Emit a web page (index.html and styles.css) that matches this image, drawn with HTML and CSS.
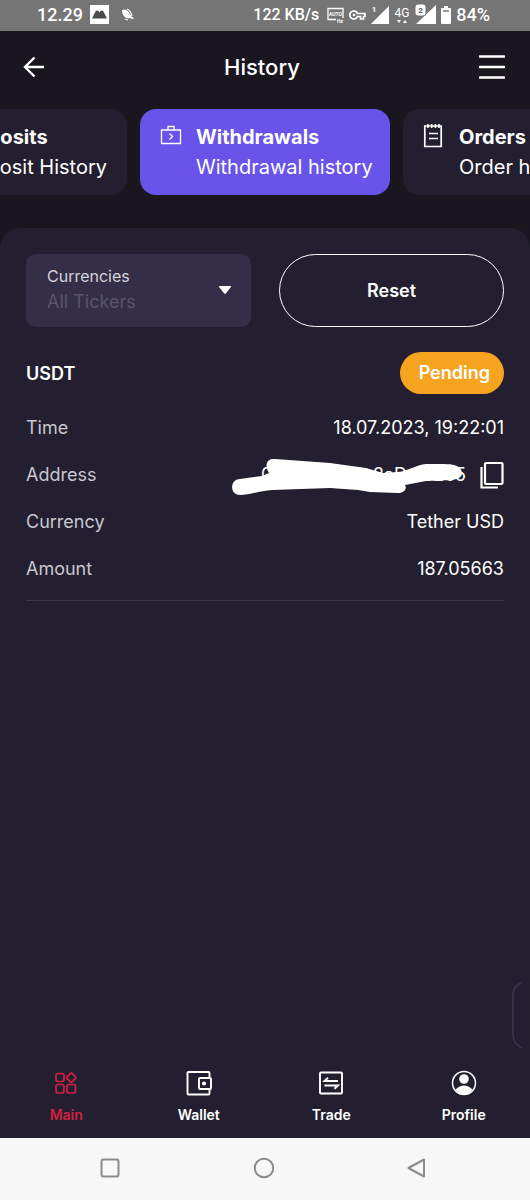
FILE: index.html
```html
<!DOCTYPE html>
<html lang="en">
<head>
<meta charset="utf-8">
<meta name="viewport" content="width=device-width, initial-scale=1">
<title>History</title>
<link rel="stylesheet" href="styles.css">
</head>
<body>
<div class="statusbar">
  <div class="status-left">
    <span>12.29</span>
    <svg width="19" height="19" viewBox="0 0 19 19" aria-hidden="true"><rect width="19" height="19" fill="#fff"/><path d="M2 13.500L5.500 6.500q1-1.500 3-.5l1 1.500 1-1.500q2-1 3 .5L17 13.500z" fill="#4c4c4c"/></svg>
    <svg class="leaf" width="14" height="14" viewBox="0 0 14 14" aria-hidden="true"><path d="M1 2q3-1 4 0 3 1 6 7l2 1-1 1-4-1q-2 1-4-1Q1 7 1 2z" fill="#fff"/><path d="M6 1c3 1 4 3 5 7M4 11l3 1" stroke="#fff" stroke-width="1.200" fill="none"/></svg>
  </div>
  <div class="status-right">
    <span class="speed">122 KB/s</span>
    <svg width="17" height="16" viewBox="0 0 17 16" aria-hidden="true"><path d="M9 12.500H1V1.500h15V11" fill="none" stroke="#fff" stroke-width="1.300"/><text x="8.500" y="9" class="tiny">AUTO</text><text x="13" y="16" class="tiny">Hz</text></svg>
    <svg width="17" height="12" viewBox="0 0 17 12" aria-hidden="true"><path d="M8.500 4.500H16v3h-1.500V10h-3V7.500h-3a4 4 0 1 1 0-3z" fill="none" stroke="#fff" stroke-width="1.700"/><circle cx="5" cy="6" r="1.300" fill="#fff"/></svg>
    <svg width="18" height="20" viewBox="0 0 18 20" aria-hidden="true"><path d="M18 1v18H0z" fill="#fff"/><text x="3" y="7" class="sim">1</text></svg>
    <svg width="16" height="20" viewBox="0 0 16 20" aria-hidden="true"><text x="8" y="12" class="net">4G</text><path d="M3 15h4l-2 3zM9 18h4l-2-3z" fill="#fff"/></svg>
    <svg width="21" height="21" viewBox="0 0 21 21" aria-hidden="true"><path d="M21 1v19H1z" fill="#fff"/><rect width="11" height="12" rx="3" fill="#fff" stroke="#757575"/><text x="5.500" y="9" class="sim dark">2</text></svg>
    <svg width="10" height="18" viewBox="0 0 10 18" aria-hidden="true"><path d="M3 0h4v2h2q1 0 1 1v14q0 1-1 1H1q-1 0-1-1V3q0-1 1-1h2z" fill="#fff"/><path d="M2 5h6" stroke="#757575" stroke-width="1.500"/></svg>
    <span>84%</span>
  </div>
</div>

<header class="header">
  <button class="icon-button" type="button" aria-label="Back"><svg width="22" height="22" viewBox="0 0 22 22"><path d="M21 11H2M11.500 1.500L2 11l9.500 9.500" fill="none" stroke="#fff" stroke-width="2.400"/></svg></button>
  <h1>History</h1>
  <button class="icon-button" type="button" aria-label="Menu"><svg width="26" height="26" viewBox="0 0 26 26"><path d="M1 2.500h24M1 13h24M1 23.500h24" stroke="#fff" stroke-width="2.600" stroke-linecap="round"/></svg></button>
</header>

<nav class="tabs" aria-label="History type">
  <a class="tab tab-first" href="#deposits">
    <span class="tab-text"><strong>Deposits</strong><span>Deposit History</span></span>
  </a>
  <a class="tab active" href="#withdrawals" aria-current="page">
    <svg width="22" height="26" viewBox="0 0 22 26" aria-hidden="true"><path d="M1.500 8h19v13.500h-19zM8 8V4.500h6V8M9.500 11.500l3 3-3 3" fill="none" stroke="#fff" stroke-width="1.300"/></svg>
    <span class="tab-text"><strong>Withdrawals</strong><span>Withdrawal history</span></span>
  </a>
  <a class="tab" href="#orders">
    <svg width="22" height="26" viewBox="0 0 22 26" aria-hidden="true"><path d="M1.800 4h16.400v20.500H1.800zM6 11.500h9M6 16.500h9" fill="none" stroke="#fff" stroke-width="1.700"/><path d="M5 2v4M8.700 2v4M12.400 2v4M16 2v4" stroke="#fff" stroke-width="1.600"/></svg>
    <span class="tab-text"><strong>Orders</strong><span>Order history</span></span>
  </a>
</nav>

<main class="panel">
  <div class="filters">
    <div class="field">
      <label for="currency">Currencies</label>
      <select id="currency"><option>All Tickers</option></select>
      <svg class="caret" width="14" height="10" viewBox="0 0 14 10" aria-hidden="true"><path d="M1.500 1h11q1 0 .4.900L8 8.200q-1 1.200-2 0L1.100 1.900Q.5 1 1.500 1z" fill="#fff"/></svg>
    </div>
    <button class="reset" type="button">Reset</button>
  </div>

  <article class="record">
    <div class="record-head"><h2>USDT</h2><span class="pill">Pending</span></div>
    <dl>
      <div class="row"><dt>Time</dt><dd>18.07.2023, 19:22:01</dd></div>
      <div class="row"><dt>Address</dt><dd class="address">
        <span class="hash"><span class="hash-start">0</span><span>2aD</span><span>5265</span>
          <svg class="scribble" width="236" height="40" viewBox="0 0 236 40" aria-hidden="true"><path d="M10 20C0 20-1 36 10 36C18 36 30 32 42 31L100 29L128 31L140 33L168 34C175 34 177 29 175 26L196 22L222 21C232 20 234 15 230 9C225 4 215 5 196 5C186 6 178 12 168 13L153 14L136 9L100 4L45 0C37-1 34 6 39 14L32 17Z" fill="#fff"/></svg>
        </span>
        <button class="icon-button" type="button" aria-label="Copy address"><svg width="24" height="28" viewBox="0 0 24 28"><rect x="5" y="2" width="17.500" height="21" rx="1" fill="none" stroke="#fff" stroke-width="2.200"/><path d="M1.500 6v20.500H18" fill="none" stroke="#fff" stroke-width="2.200"/></svg></button>
      </dd></div>
      <div class="row"><dt>Currency</dt><dd>Tether USD</dd></div>
      <div class="row"><dt>Amount</dt><dd>187.05663</dd></div>
    </dl>
  </article>

  <svg class="edge-handle" width="12" height="68" viewBox="0 0 12 68" aria-hidden="true"><path d="M11 1Q2 5 2 14v40q0 9 9 13" fill="none" stroke="#35314a" stroke-width="2"/></svg>

  <nav class="bottom-nav" aria-label="Main">
    <a class="current" href="#main"><svg width="26" height="26" viewBox="0 0 26 26" aria-hidden="true"><g fill="none" stroke="currentColor" stroke-width="1.700"><rect x="3" y="3.500" width="8" height="8" rx="2"/><rect x="3" y="14.500" width="8" height="8.500" rx="2"/><rect x="14" y="14.500" width="8.500" height="8.500" rx="2"/><path d="M17.500 3.300q.7-.7 1.400 0l3.600 3.600q.7.700 0 1.400l-3.600 3.600q-.7.700-1.400 0l-3.600-3.600q-.7-.7 0-1.400z"/></g></svg>Main</a>
    <a href="#wallet"><svg width="26" height="26" viewBox="0 0 26 26" aria-hidden="true"><g fill="none" stroke="currentColor" stroke-width="1.900"><path d="M23.500 7V3q0-1-1-1h-20q-1 0-1 1v20.500q0 1 1 1h20q1 0 1-1V19"/><rect x="13" y="8" width="12" height="11" rx="1"/></g><circle cx="18" cy="13.500" r="2.100" fill="currentColor"/></svg>Wallet</a>
    <a href="#trade"><svg width="26" height="26" viewBox="0 0 26 26" aria-hidden="true"><g fill="none" stroke="currentColor" stroke-width="1.900"><rect x="2" y="2.500" width="22" height="21" rx="1"/><path d="M20 11H6.500l3.500-3.300M6.500 15.500H20l-3.500 3.300"/></g></svg>Trade</a>
    <a href="#profile"><svg width="26" height="26" viewBox="0 0 26 26" aria-hidden="true"><circle cx="13" cy="13" r="11.500" fill="none" stroke="currentColor" stroke-width="1.500"/><circle cx="13" cy="9" r="4.800" fill="currentColor"/><path d="M4.500 19.500q8.500-8 17 0Q18 24.500 13 24.500t-8.500-5z" fill="currentColor"/></svg>Profile</a>
  </nav>
</main>

<footer class="system-nav">
  <button class="icon-button" type="button" aria-label="Recent apps"><svg width="22" height="22" viewBox="0 0 22 22"><rect x="2.500" y="2.500" width="17" height="17" rx="2" fill="none" stroke="#8b8b8b" stroke-width="2"/></svg></button>
  <button class="icon-button" type="button" aria-label="Home"><svg width="22" height="22" viewBox="0 0 22 22"><circle cx="11" cy="11" r="9.300" fill="none" stroke="#8b8b8b" stroke-width="2"/></svg></button>
  <button class="icon-button" type="button" aria-label="Back"><svg width="22" height="22" viewBox="0 0 22 22"><path d="M18 2.500v17L2.500 11z" fill="none" stroke="#8b8b8b" stroke-width="2" stroke-linejoin="round"/></svg></button>
</footer>
</body>
</html>
```
FILE: styles.css
```css
* { box-sizing: border-box; }

body {
  margin: 0;
  min-height: 100vh;
  display: flex;
  flex-direction: column;
  overflow-x: hidden;
  background: #19161f;
  color: #fff;
  font-family: Inter, "Liberation Sans", sans-serif;
  font-size: 18px;
}

a { color: inherit; text-decoration: none; }
svg { display: block; flex: none; }
h1, h2, dl, dd { margin: 0; }

.icon-button {
  display: block;
  padding: 0;
  border: 0;
  background: none;
}

.statusbar {
  display: flex;
  justify-content: space-between;
  height: 31px;
  padding: 0 40px 2px 37px;
  background: #757575;
  font-family: Roboto, sans-serif;
  font-size: 18px;
  font-weight: 500;
}

.status-left, .status-right { display: flex; align-items: center; }
.status-left { gap: 7px; }
.status-right { gap: 5px; }
.speed { margin-right: 3px; font-size: 16px; }
.leaf { margin-left: 5px; }
.tiny { fill: #fff; font-size: 5px; font-weight: 700; text-anchor: middle; }
.sim { fill: #fff; font-size: 8px; font-weight: 700; text-anchor: middle; }
.dark { fill: #555; }
.net { fill: #fff; font-size: 12px; font-weight: 400; text-anchor: middle; }

.header {
  display: flex;
  align-items: center;
  justify-content: space-between;
  height: 72px;
  padding: 0 25px 0 23px;
}

.header h1 { font-size: 22px; font-weight: 500; }

.tabs {
  display: flex;
  justify-content: center;
  gap: 13px;
  margin: 6px 0 33px;
  overflow: hidden;
}

.tab {
  display: flex;
  flex: none;
  gap: 14px;
  width: 250px;
  padding: 13px 20px;
  border-radius: 16px;
  background: #231f30;
}

.tab-first { justify-content: flex-end; }
.tab.active { background: #6854ea; }
.tab-text { display: flex; flex-direction: column; font-size: 20px; line-height: 30px; white-space: nowrap; }
.tab-text strong { font-weight: 700; }

.panel {
  position: relative;
  display: flex;
  flex: 1;
  flex-direction: column;
  border-radius: 20px 20px 0 0;
  background: #231f30;
}

.filters {
  display: grid;
  grid-template-columns: 1fr 1fr;
  gap: 28px;
  padding: 26px 26px 0;
}

.field {
  position: relative;
  display: flex;
  flex-direction: column;
  padding: 9px 21px 12px;
  border-radius: 10px;
  background: #342f46;
}

.field label { color: #d3d1da; font-size: 16px; line-height: 26px; }

.field select {
  appearance: none;
  padding: 0;
  border: 0;
  background: none;
  color: #5a556b;
  font: inherit;
  line-height: 26px;
}

.caret { position: absolute; top: 31px; right: 19px; pointer-events: none; }

.reset {
  border: 1px solid #fff;
  border-radius: 37px;
  background: none;
  color: #fff;
  font: inherit;
  font-weight: 600;
}

.record {
  margin: 25px 26px 0;
  padding-bottom: 8px;
  border-bottom: 1px solid #3b374b;
}

.record-head { display: flex; align-items: center; justify-content: space-between; }
.record-head h2 { font-size: 18px; font-weight: 600; }
.pill { padding: 0 14px 0 19px; border-radius: 21px; background: #f6a41f; font-weight: 600; line-height: 42px; }

dl { margin-top: 10px; }
.row { display: flex; align-items: center; justify-content: space-between; height: 47px; }
dt { color: #c9c7d0; }

.address { display: flex; align-items: center; gap: 14px; }
.hash { position: relative; display: flex; gap: 15px; width: 205px; }
.hash-start { margin-right: auto; }
.scribble { position: absolute; top: -5px; right: 0; }

.edge-handle { position: absolute; right: 7px; bottom: 89px; }

.bottom-nav {
  display: grid;
  grid-template-columns: repeat(4, 1fr);
  margin-top: auto;
  padding-bottom: 12px;
  font-size: 14px;
  font-weight: 600;
  line-height: 22px;
}

.bottom-nav a { display: flex; flex-direction: column; align-items: center; gap: 8px; }
.bottom-nav .current { color: #d0213f; }

.system-nav {
  display: flex;
  align-items: center;
  justify-content: space-between;
  height: 62px;
  padding: 0 102px 3px 99px;
  background: #f7f7f7;
}
```
